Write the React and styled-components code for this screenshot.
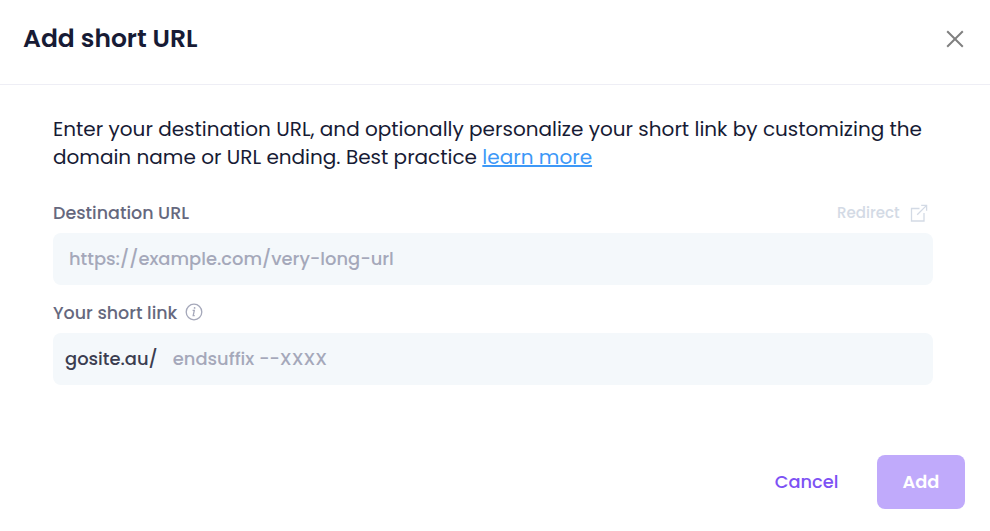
import React, { useState } from 'react';
import styled, { createGlobalStyle } from 'styled-components';

const GlobalStyle = createGlobalStyle`
    * {
        box-sizing: border-box;
    }
    body {
        margin: 0;
        background-color: #fff;
        font-family: Poppins, Inter, sans-serif;
    }
`;

const Modal = styled.div`
    display: flex;
    flex-direction: column;
    height: 531px;
    background-color: #fff;
    color: #171b35;
`;

const Header = styled.header`
    display: flex;
    align-items: center;
    justify-content: space-between;
    height: 85px;
    padding: 0 26px 6px 23px;
    border-bottom: 1px solid #eeeef5;
`;

const Title = styled.h1`
    margin: 0;
    font-size: 25px;
    font-weight: 600;
    line-height: 36px;
`;

const IconButton = styled.button`
    display: flex;
    padding: 0;
    border: none;
    background: none;
    color: #808080;
    cursor: pointer;
`;

const Body = styled.div`
    flex: 1;
    padding: 30px 57px 0 53px;
`;

const Intro = styled.p`
    margin: 0 0 28px;
    font-size: 20px;
    line-height: 28px;
`;

const Link = styled.a`
    color: #3d98f7;
    text-decoration: underline;
    text-decoration-skip-ink: none;
    text-decoration-thickness: 2px;
    text-underline-offset: 1px;
`;

const LabelRow = styled.div`
    display: flex;
    align-items: center;
    justify-content: space-between;
    height: 28px;
    margin-bottom: 6px;
    padding-right: 5px;
`;

const Label = styled.label`
    display: flex;
    align-items: center;
    gap: 7.5px;
    color: #66687e;
    font-size: 17.5px;
    font-weight: 500;

    svg {
        margin-top: -2px;
    }
`;

const Redirect = styled.span`
    display: flex;
    align-items: center;
    gap: 10.5px;
    color: #d3dae5;
    font-size: 15px;
    font-weight: 500;
    line-height: 22px;
    padding-bottom: 1px;
`;

const Field = styled.div`
    display: flex;
    align-items: center;
    gap: 15px;
    height: 52px;
    margin-bottom: 14px;
    padding: 0 ${props => (props.$prefixed ? '12px' : '16px')} 2px;
    border-radius: 8px;
    background-color: #f4f8fb;
    font-size: 17.9px;
    font-weight: 500;
`;

const Prefix = styled.span`
    color: #3b3d50;
`;

const Input = styled.input`
    flex: 1;
    min-width: 0;
    padding: 0;
    border: none;
    outline: none;
    background: none;
    color: #171b35;
    font: inherit;

    &::placeholder {
        color: #a5a8ba;
        opacity: 1;
    }
`;

const Footer = styled.footer`
    display: flex;
    justify-content: flex-end;
    gap: 14px;
    padding: 0 25px 22px;
`;

const Button = styled.button`
    width: ${props => (props.$primary ? '88px' : '113px')};
    height: 54px;
    padding: 0 0 2px;
    border: none;
    border-radius: 8px;
    background-color: ${props => (props.$primary ? '#c0aafb' : 'transparent')};
    color: ${props => (props.$primary ? '#fff' : '#7d52f4')};
    font-family: inherit;
    font-size: 17.8px;
    font-weight: ${props => (props.$primary ? 600 : 500)};
    cursor: pointer;
`;

const CloseIcon = () => (
    <svg width="18" height="18" viewBox="0 0 18 18" fill="none" stroke="currentColor" strokeWidth="2">
        <path d="M1.2 1.2 16.8 16.8M16.8 1.2 1.2 16.8" />
    </svg>
);

const ExternalIcon = () => (
    <svg width="18" height="18" viewBox="0 0 18 18" fill="none" stroke="currentColor" strokeWidth="1.3">
        <path d="M9.5 4.5H1.5V17H14V9" />
        <path d="M7.2 10.8 16.6 1.4M11.2 1.4H16.6V6.8" />
    </svg>
);

const InfoIcon = () => (
    <svg width="18" height="18" viewBox="0 0 18 18" fill="none" stroke="#a5a8ba" strokeWidth="1.3">
        <circle cx="9" cy="9" r="7.8" />
        <path d="M7.6 7.4H9.3L8.2 12.6H9.7" />
        <circle cx="9.6" cy="4.9" r="0.9" fill="#a5a8ba" stroke="none" />
    </svg>
);

const AddShortUrl = () => {
    const [url, setUrl] = useState('');
    const [suffix, setSuffix] = useState('');

    return (
        <Modal>
            <Header>
                <Title>Add short URL</Title>
                <IconButton aria-label="Close"><CloseIcon /></IconButton>
            </Header>
            <Body>
                <Intro>
                    Enter your destination URL, and optionally personalize your short link by customizing the
                    domain name or URL ending. Best practice <Link href="#">learn more</Link>
                </Intro>
                <LabelRow>
                    <Label htmlFor="url">Destination URL</Label>
                    <Redirect>Redirect <ExternalIcon /></Redirect>
                </LabelRow>
                <Field>
                    <Input
                        id="url"
                        placeholder="https://example.com/very-long-url"
                        value={url}
                        onChange={e => setUrl(e.target.value)}
                    />
                </Field>
                <LabelRow>
                    <Label htmlFor="suffix">Your short link <InfoIcon /></Label>
                </LabelRow>
                <Field $prefixed>
                    <Prefix>gosite.au/</Prefix>
                    <Input
                        id="suffix"
                        placeholder="endsuffix --XXXX"
                        value={suffix}
                        onChange={e => setSuffix(e.target.value)}
                    />
                </Field>
            </Body>
            <Footer>
                <Button>Cancel</Button>
                <Button $primary>Add</Button>
            </Footer>
        </Modal>
    );
};

const App = () => (
    <>
        <GlobalStyle />
        <AddShortUrl />
    </>
);

export default App;
